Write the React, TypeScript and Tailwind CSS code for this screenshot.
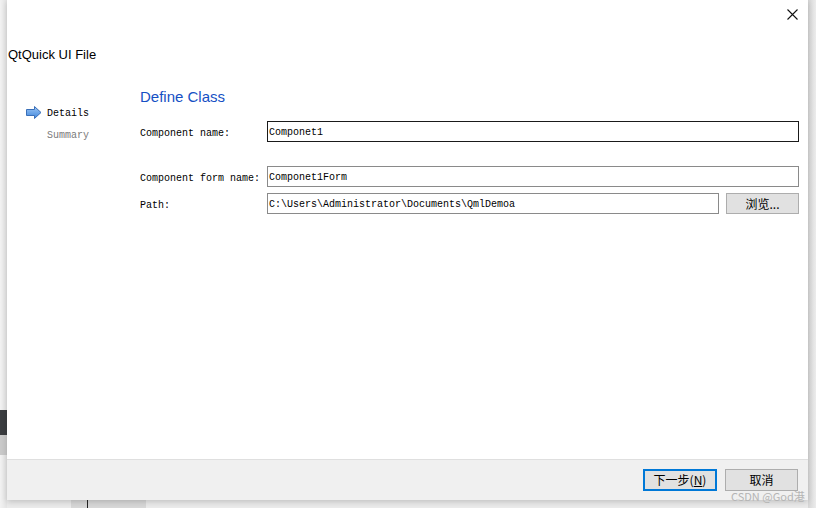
import React from 'react';

const mono = "font-['Liberation_Mono','Noto_Sans_CJK_SC',monospace]";
const cjk = "font-['Noto_Sans_CJK_SC','Liberation_Sans',sans-serif]";

function ArrowIcon() {
  return (
    <svg width="16" height="13" viewBox="0 0 16 13">
      <defs>
        <linearGradient id="ag" x1="0" y1="0" x2="0" y2="1">
          <stop offset="0" stopColor="#9cc6f5" />
          <stop offset="1" stopColor="#3f86dc" />
        </linearGradient>
      </defs>
      <path d="M0.5 3.5 H8.5 V0.5 L15 6.5 L8.5 12.5 V9.5 H0.5 Z" fill="url(#ag)" stroke="#3a6fb8" strokeWidth="1" />
    </svg>
  );
}

function Field({ label, value, top, focused, children }: { label: string; value: string; top: string; focused?: boolean; children?: React.ReactNode }) {
  return (
    <div className={`flex items-center ${top}`}>
      <div className={`w-[127px] pt-[3px] text-[10px] text-black ${mono}`}>{label}</div>
      <div
        className={`flex-1 h-[21px] flex items-center pt-[2px] px-[1px] bg-white border ${focused ? 'border-[#1a1a1a]' : 'border-[#8a8a8a]'} text-[10px] ${mono}`}
      >
        {value}
      </div>
      {children}
    </div>
  );
}

export default function App() {
  return (
    <div className="flex w-[816px] h-[508px] overflow-hidden bg-[#ebebeb]">
      <div className="w-[7px] flex flex-col bg-gradient-to-r from-[#f2f2f2] to-[#e4e4e4]">
        <div className="h-[410px]" />
        <div className="h-[25px] bg-[#3b3d40]" />
        <div className="h-[20px] bg-[#c9c9c9]" />
      </div>

      <div className="w-[801px] flex flex-col">
        <div className="relative h-[500px] bg-white flex flex-col shadow-[0_2px_6px_rgba(0,0,0,0.18)]">
          <div className="h-[47px] flex justify-end pt-[9px] pr-[10px]">
            <svg width="11" height="11" viewBox="0 0 11 11">
              <path d="M0.5 0.5 L10.5 10.5 M10.5 0.5 L0.5 10.5" stroke="#111" strokeWidth="1.1" />
            </svg>
          </div>
          <div className="pl-[1px] h-[16px] leading-[16px] text-[13px] text-black font-['Liberation_Sans',sans-serif]">
            QtQuick UI File
          </div>

          <div className="flex flex-1">
            <div className="w-[133px] pl-[19px] pt-[41px] flex flex-col">
              <div className="flex items-center h-[16px] gap-[5px]">
                <ArrowIcon />
                <span className={`pt-[2px] text-[10px] text-black ${mono}`}>Details</span>
              </div>
              <div className={`mt-[6px] h-[16px] leading-[16px] pt-[2px] pl-[21px] text-[10px] text-[#7a7a7a] ${mono}`}>Summary</div>
            </div>

            <div className="flex-1 pr-[9px] pt-[24px] flex flex-col">
              <div className="h-[20px] leading-[20px] text-[15px] text-[#1550c4] font-['Liberation_Sans',sans-serif]">
                Define Class
              </div>
              <Field label="Component name:" value="Componet1" top="mt-[14px]" focused />
              <Field label="Component form name:" value="Componet1Form" top="mt-[24px]" />
              <Field label="Path:" value="C:\Users\Administrator\Documents\QmlDemoa" top="mt-[6px]">
                <div className={`ml-[7px] w-[73px] h-[21px] flex items-center justify-center bg-[#e1e1e1] border border-[#adadad] text-[12px] text-black ${cjk}`}>
                  浏览...
                </div>
              </Field>
            </div>
          </div>

          <div className="h-[41px] bg-[#f0f0f0] border-t border-[#dfdfdf] flex justify-end items-start pt-[9px] pr-[10px] gap-[8px]">
            <div className={`w-[74px] h-[22px] flex items-center justify-center bg-[#e1e1e1] border-2 border-[#0078d7] text-[12px] text-black ${cjk}`}>
              下一步(<span className="underline">N</span>)
            </div>
            <div className={`w-[73px] h-[22px] flex items-center justify-center bg-[#e1e1e1] border border-[#adadad] text-[12px] text-black ${cjk}`}>
              取消
            </div>
          </div>

          <div className={`absolute left-[724px] top-[491px] leading-none text-[11px] text-[#b4b4b4] ${cjk}`}>CSDN @God港</div>
        </div>
        <div className="flex-1 flex">
          <div className="ml-[64px] w-[75px] bg-[#d8d8d8] flex">
            <div className="ml-[16px] w-[1px] bg-[#222]" />
          </div>
        </div>
      </div>

      <div className="flex-1 bg-gradient-to-r from-[#d6d6d6] to-[#ececec]" />
    </div>
  );
}
